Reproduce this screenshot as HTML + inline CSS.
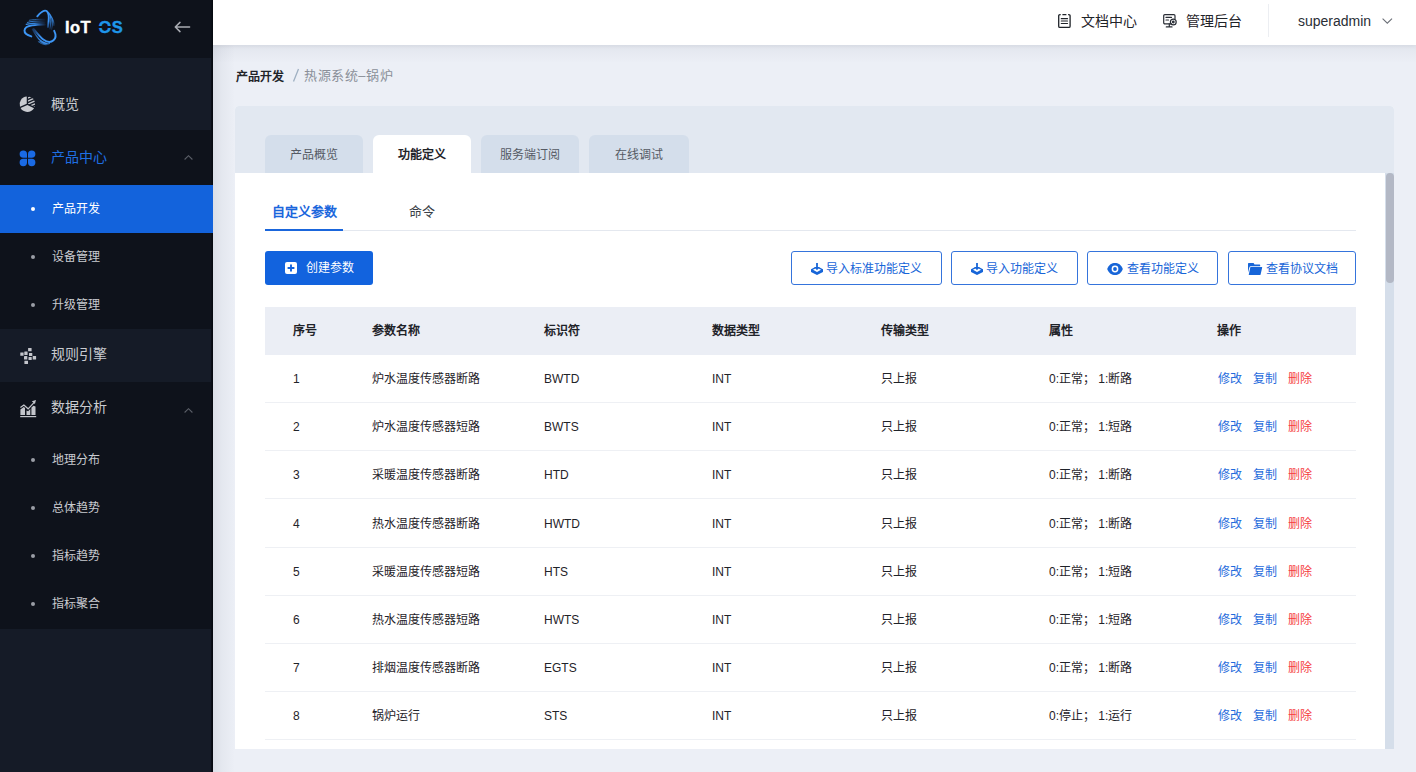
<!DOCTYPE html>
<html lang="zh-CN"><head><meta charset="utf-8">
<style>
*{margin:0;padding:0;box-sizing:border-box}
html,body{width:1416px;height:772px;overflow:hidden;background:#eceff6;font-family:"Liberation Sans",sans-serif;}
.abs{position:absolute}
svg{position:absolute;overflow:visible}
#side{position:absolute;left:0;top:0;width:213px;height:772px;background:#151b27;}
.mi{position:absolute;left:0;width:213px;}
.dark{background:#0e121b}
.lt{background:#151b27}
.mt{position:absolute;left:51px;font-size:14px;line-height:20px;color:#c9cbd0;white-space:nowrap}
.st{position:absolute;left:52px;font-size:12px;line-height:20px;color:#c9cbd0;white-space:nowrap}
.dot{position:absolute;left:31px;width:4px;height:4px;border-radius:50%;background:#9a9ea6}
.chev{position:absolute;left:184px;width:9px;height:5px}
#hdr{position:absolute;left:213px;top:0;width:1203px;height:45px;background:#fff;box-shadow:0 1px 4px rgba(0,21,41,.06);z-index:2}
#hshade{position:absolute;left:213px;top:45px;width:1203px;height:18px;background:linear-gradient(to bottom,rgba(30,45,70,.055),rgba(30,45,70,.03) 35%,rgba(30,45,70,0));z-index:1}
#shade{position:absolute;left:213px;top:45px;width:22px;height:727px;background:linear-gradient(to right,rgba(40,50,70,.085),rgba(40,50,70,.04) 40%,rgba(40,50,70,0));z-index:1}
.ht{position:absolute;font-size:14px;line-height:20px;color:#1f2329;white-space:nowrap}
#card{position:absolute;left:235px;top:106px;width:1159px;height:643px;background:#fff;border-radius:4px 4px 0 0;overflow:hidden}
#ctop{position:absolute;left:0;top:0;width:1159px;height:67px;background:#e2e8f1}
.tab{position:absolute;top:29px;height:38px;width:98px;background:#d4deeb;border-radius:6px 6px 0 0;font-size:12px;color:#555a64;text-align:center;line-height:40px}
.tab.on{background:#fff;color:#1f2329;font-weight:bold}
.subt{position:absolute;top:94px;font-size:13px;line-height:24px;white-space:nowrap}
.btn{position:absolute;top:145px;height:34px;border:1px solid #3574dc;border-radius:3px;font-size:12px;line-height:34px;color:#1765d8;white-space:nowrap;padding-left:36px}
.btn svg{top:11px;left:19px}
.thead{position:absolute;left:30px;top:201px;width:1091px;height:48px;background:#ebeef5}
.th{position:absolute;font-size:12px;line-height:48px;font-weight:bold;color:#1f2329;white-space:nowrap}
.td{position:absolute;font-size:12px;line-height:48px;color:#1f2329;white-space:nowrap}
.row{position:absolute;left:30px;width:1091px;height:48px;border-bottom:1px solid #eef0f4}
.ops span{color:#1f6bdc;margin-right:11px}
.ops span.del{color:#f53d41}
#sb{position:absolute;left:1150px;top:67px;width:9px;height:576px;background:#d5deea}
#thumb{position:absolute;left:1px;top:0;width:8px;height:110px;background:#b3b8c5;border-radius:4px}
</style></head>
<body>
<div id="side">
  <div class="mi dark" style="top:0;height:58px"></div>
  <div class="mi lt" style="top:58px;height:72px"></div>
  <div class="mi dark" style="top:130px;height:499px"></div>
  <div class="mi lt" style="top:329px;height:53px"></div>
  <div class="abs" style="left:211px;top:0;width:2px;height:772px;background:linear-gradient(to right,#0c1018,#06090f)"></div>
  <div class="mi" style="top:185px;height:48px;background:#1363dc"></div>

  <!-- logo -->
  <svg style="left:20px;top:7px" width="40" height="40" viewBox="0 0 40 40">
    <defs>
      <linearGradient id="gt" gradientUnits="userSpaceOnUse" x1="0" y1="4" x2="0" y2="25"><stop offset="0" stop-color="#3d97f7"/><stop offset=".5" stop-color="#3990f0"/><stop offset="1" stop-color="#2a6fd0" stop-opacity="0"/></linearGradient>
      <linearGradient id="gl" gradientUnits="userSpaceOnUse" x1="5" y1="0" x2="27" y2="0"><stop offset="0" stop-color="#3d97f7"/><stop offset=".45" stop-color="#3990f0"/><stop offset="1" stop-color="#2a6fd0" stop-opacity="0"/></linearGradient>
      <linearGradient id="gb" gradientUnits="userSpaceOnUse" x1="34" y1="34" x2="10" y2="19"><stop offset="0" stop-color="#3d97f7"/><stop offset=".5" stop-color="#3990f0"/><stop offset="1" stop-color="#2a6fd0" stop-opacity="0"/></linearGradient>
    </defs>
    <g fill="none" stroke-linecap="round">
      <g stroke="url(#gt)">
        <path d="M17.3 9.3C20 6 22.5 3.8 25 3.6C27.5 3.5 28.8 6.5 28.8 10.5C28.8 13.5 28.5 16 28 20" stroke-width="1.9"/>
        <path d="M28.6 5.8C30.5 7.6 31 10 31 13C31 16 30.5 19 30 22" stroke-width="1.2" opacity=".9"/>
        <path d="M30.2 7.8C32.3 10 32.8 13 32.7 16C32.6 18.5 32 20.5 31.5 22.5" stroke-width="1.1" opacity=".75"/>
        <path d="M31.6 10.3C33.6 12.5 34.1 15.5 33.9 18.5" stroke-width="1" opacity=".6"/>
      </g>
      <g stroke="url(#gl)">
        <path d="M11.3 29.4C7 28 4.3 26 4.5 23.5C4.7 20.5 8 19 12 18.4C16 17.8 19 17.6 25 17.6" stroke-width="1.9"/>
        <path d="M6.2 17.4C9 16.3 14 15.8 25 15.8" stroke-width="1.2" opacity=".9"/>
        <path d="M7.4 15.4C10.5 14.4 15 14 25 14" stroke-width="1.1" opacity=".75"/>
        <path d="M9.3 13.3C12 12.6 16 12.3 25 12.3" stroke-width="1" opacity=".6"/>
      </g>
      <g stroke="url(#gb)">
        <path d="M34.2 23.8C35.8 27 36 31 33.5 33.3C31 35.5 27 35.2 23.3 32.5C20 30 17.5 26.5 13.5 22" stroke-width="1.9"/>
        <path d="M27 36.6C24 36 21.5 34.8 19.3 32.5C16.8 30 14.8 26.5 12.3 22.2" stroke-width="1.2" opacity=".9"/>
        <path d="M29.5 36.4C26 37.5 22.5 36.5 19.8 34.3" stroke-width="1.1" opacity=".75"/>
        <path d="M26 37.8C23 37.5 20.5 36.5 18.2 34.6" stroke-width="1" opacity=".6"/>
      </g>
    </g>
  </svg>
  <div class="abs" style="left:65px;top:14.5px;font-size:16.5px;line-height:24px;font-weight:bold;color:#fff;letter-spacing:.4px;-webkit-text-stroke:.35px #fff">IoT</div>
  <div class="abs" style="left:98.5px;top:14.5px;font-size:16.5px;line-height:24px;font-weight:bold;color:#1e96ea;letter-spacing:.3px;-webkit-text-stroke:.35px #1e96ea">OS</div>
  <div class="abs" style="left:98px;top:25.8px;width:13px;height:1.8px;background:#0e121b"></div>
  <svg style="left:174px;top:21px" width="17" height="12" viewBox="0 0 17 12"><path d="M15.6 6H2 M6 1.4L1.3 6L6 10.6" fill="none" stroke="#a9acb3" stroke-width="1.5" stroke-linecap="round" stroke-linejoin="round"/></svg>

  <!-- 概览 pie -->
  <svg style="left:19px;top:96px" width="16" height="16" viewBox="0 0 16 16">
    <defs><clipPath id="pcl"><path d="M9.05 7.80L9.05 0.43A7.8 7.8 0 0 1 15.64 11.10Z"/></clipPath></defs>
    <path d="M7.75 7.78L1.03 10.77A7.8 7.8 0 0 1 7.75 0.43Z" fill="#c9cbd0"/>
    <path d="M8.38 8.92L15.06 12.26A7.8 7.8 0 0 1 1.56 11.96Z" fill="#c9cbd0"/>
    <g clip-path="url(#pcl)" stroke="#c9cbd0" stroke-width="1.4">
      <path d="M6 3.4L16 -1.2 M6 6.4L16 1.8 M6 9.4L16 4.8 M6 12.4L16 7.8 M6 15.4L16 10.8"/>
    </g>
  </svg>
  <div class="mt" style="top:94px">概览</div>

  <!-- 产品中心 clover -->
  <svg style="left:19px;top:150px" width="17" height="17" viewBox="0 0 17 17" fill="#1a6ae4">
    <path d="M8 7.8H4.3A3.7 3.7 0 1 1 8 4.1Z"/>
    <path d="M9 7.8V4.1A3.7 3.7 0 1 1 12.7 7.8Z"/>
    <path d="M8 8.8V12.5A3.7 3.7 0 1 1 4.3 8.8Z"/>
    <path d="M9 8.8H12.7A3.7 3.7 0 1 1 9 12.5Z"/>
  </svg>
  <div class="mt" style="top:147px;color:#1f6fe3">产品中心</div>
  <svg class="chev" style="top:155px" viewBox="0 0 9 5"><path d="M0.6 4.5L4.5 0.7L8.4 4.5" fill="none" stroke="#5b5f68" stroke-width="1.1"/></svg>

  <div class="dot" style="top:207px;background:#fff"></div>
  <div class="st" style="top:199px;color:#fff">产品开发</div>
  <div class="dot" style="top:255px"></div>
  <div class="st" style="top:247px">设备管理</div>
  <div class="dot" style="top:303px"></div>
  <div class="st" style="top:295px">升级管理</div>

  <!-- 规则引擎 -->
  <svg style="left:19.5px;top:348px" width="17" height="17" viewBox="0 0 17 17" fill="#c3c5cb">
    <rect x="8.1" y="0" width="3.5" height="3.3" rx=".3"/>
    <rect x="0.3" y="4.4" width="3.3" height="3.4" rx=".3"/>
    <rect x="4.3" y="3.6" width="3.3" height="3.4" rx=".3"/>
    <rect x="9" y="4.9" width="3.3" height="3.2" rx=".3"/>
    <rect x="4" y="8.1" width="3.3" height="3.4" rx=".3"/>
    <rect x="8.5" y="8.9" width="3.2" height="3.2" rx=".3"/>
    <rect x="12.7" y="8" width="3.4" height="3.5" rx=".3"/>
    <rect x="4.4" y="12.8" width="3.6" height="3.2" rx=".3"/>
  </svg>
  <div class="mt" style="top:344px">规则引擎</div>

  <!-- 数据分析 -->
  <svg style="left:19.5px;top:400px" width="17" height="18" viewBox="0 0 17 18" fill="#c3c5cb">
    <rect x="0.2" y="16" width="16" height="1.2"/>
    <path d="M0.4 9.4L3.8 7L5 7.9V15H0.4Z"/>
    <path d="M6.5 10.4L8.1 11.2L10.3 9V15H6.5Z"/>
    <path d="M11.4 7.8L13.4 5.7L15.5 6.5V15H11.4Z"/>
    <path d="M0.4 7.6L3.9 5.1L8.1 8.8L14.2 2.3" fill="none" stroke="#c3c5cb" stroke-width="1.2"/>
    <path d="M11.8 1.3L16 0L14.9 4.1Z"/>
  </svg>
  <div class="mt" style="top:397px">数据分析</div>
  <svg class="chev" style="top:408px" viewBox="0 0 9 5"><path d="M0.6 4.5L4.5 0.7L8.4 4.5" fill="none" stroke="#5b5f68" stroke-width="1.1"/></svg>

  <div class="dot" style="top:458px"></div>
  <div class="st" style="top:450px">地理分布</div>
  <div class="dot" style="top:506px"></div>
  <div class="st" style="top:498px">总体趋势</div>
  <div class="dot" style="top:554px"></div>
  <div class="st" style="top:546px">指标趋势</div>
  <div class="dot" style="top:602px"></div>
  <div class="st" style="top:594px">指标聚合</div>
</div>

<div id="hdr">
  <svg style="left:845px;top:13.5px" width="13" height="14" viewBox="0 0 13 14" fill="none" stroke="#1f2329" stroke-width="1.3" stroke-linecap="round">
    <path d="M2.2 0.7H1.9A1.2 1.2 0 0 0 0.7 1.9V12.2A1.2 1.2 0 0 0 1.9 13.4H10.9A1.2 1.2 0 0 0 12.1 12.2V1.9A1.2 1.2 0 0 0 10.9 0.7H10.6 M4.9 0.7H7.9"/>
    <path d="M3.3 4.7H9.5 M3.3 7H9.5 M3.3 9.5H9.5" stroke-width="1.2"/>
  </svg>
  <div class="ht" style="left:868px;top:11px">文档中心</div>
  <svg style="left:950px;top:13.5px" width="15" height="14" viewBox="0 0 15 14" fill="none" stroke="#2a2e36" stroke-width="1.2" stroke-linecap="round">
    <path d="M8.5 9.8H1.8A1.1 1.1 0 0 1 0.7 8.7V1.8A1.1 1.1 0 0 1 1.8 0.7H10.9A1.1 1.1 0 0 1 12 1.8V4.6"/>
    <path d="M3 3.4H8.5 M3 6H5.5"/>
    <path d="M6.3 9.8V12.8 M3.3 12.9H9"/>
    <circle cx="10.3" cy="8" r="2.9"/>
    <circle cx="10.3" cy="8" r=".8" fill="#2a2e36"/>
  </svg>
  <div class="ht" style="left:973px;top:11px">管理后台</div>
  <div class="abs" style="left:1055px;top:4px;width:1px;height:33px;background:#eceef2"></div>
  <div class="ht" style="left:1085px;top:11px;color:#2a2e36">superadmin</div>
  <svg style="left:1169px;top:17.5px" width="11" height="6" viewBox="0 0 11 6"><path d="M0.6 0.6L5.3 5.2L10 0.6" fill="none" stroke="#6b6f77" stroke-width="1.1"/></svg>
</div>
<div id="shade"></div>
<div id="hshade"></div>

<div class="abs" style="left:236px;top:66.5px;font-size:12px;line-height:20px;font-weight:bold;color:#1f2329;white-space:nowrap">产品开发</div>
<svg style="left:292px;top:68px" width="8" height="15" viewBox="0 0 8 15"><path d="M6.5 1L1.5 13.6" stroke="#9fb0c2" stroke-width="1.3"/></svg>
<div class="abs" style="left:304px;top:65.5px;font-size:13px;letter-spacing:.55px;line-height:20px;color:#8a8f99;white-space:nowrap">热源系统–锅炉</div>

<div id="card">
  <div id="ctop"></div>
  <div class="tab" style="left:30px">产品概览</div>
  <div class="tab on" style="left:138px">功能定义</div>
  <div class="tab" style="left:246px">服务端订阅</div>
  <div class="tab" style="left:354px;width:100px">在线调试</div>

  <div class="subt" style="left:37px;color:#1a66dc;font-weight:bold">自定义参数</div>
  <div class="subt" style="left:174px;color:#3a3f48">命令</div>
  <div class="abs" style="left:30px;top:124px;width:1091px;height:1px;background:#e4e8ef"></div>
  <div class="abs" style="left:30px;top:123px;width:78px;height:2px;background:#1a66dc"></div>

  <div class="abs" style="left:30px;top:145px;width:108px;height:34px;background:#1263de;border-radius:3px"></div>
  <svg style="left:50px;top:156px" width="12" height="12" viewBox="0 0 12 12"><rect width="12" height="12" rx="2" fill="#fff"/><path d="M6 2.6V9.4 M2.6 6H9.4" stroke="#1263de" stroke-width="1.9"/></svg>
  <div class="abs" style="left:71px;top:145px;line-height:34px;font-size:12px;color:#fff;white-space:nowrap">创建参数</div>

  <div class="btn" style="left:556px;width:151px;padding-left:34px"><svg width="12" height="12" viewBox="0 0 12 12" fill="#1765d8"><path d="M0 6.2L3.8 4.2H8.2L12 6.2V9.1L6 12L0 9.1Z"/><path d="M1.9 6.8L6 4.7L10.1 6.8L6 9Z" fill="#fff"/><rect x="5.1" y="0" width="1.8" height="5"/><path d="M3.2 4L6 7.3L8.8 4Z"/></svg>导入标准功能定义</div>
  <div class="btn" style="left:716px;width:127px;padding-left:34px"><svg width="12" height="12" viewBox="0 0 12 12" fill="#1765d8"><path d="M0 6.2L3.8 4.2H8.2L12 6.2V9.1L6 12L0 9.1Z"/><path d="M1.9 6.8L6 4.7L10.1 6.8L6 9Z" fill="#fff"/><rect x="5.1" y="0" width="1.8" height="5"/><path d="M3.2 4L6 7.3L8.8 4Z"/></svg>导入功能定义</div>
  <div class="btn" style="left:852px;width:131px;padding-left:39px"><svg width="16" height="12" viewBox="0 0 16 12"><path d="M0.2 6C1.8 1.6 4.8 0 8 0C11.2 0 14.2 1.6 15.8 6C14.2 10.4 11.2 12 8 12C4.8 12 1.8 10.4 0.2 6Z" fill="#1765d8"/><circle cx="8" cy="6" r="3.4" fill="#fff"/><circle cx="8" cy="6" r="1.9" fill="#1765d8"/></svg>查看功能定义</div>
  <div class="btn" style="left:993px;width:128px;padding-left:37px"><svg width="14" height="12" viewBox="0 0 14 12" fill="#1765d8"><path d="M0 0.7Q0 0 0.7 0H5.6L6.5 1.6H11.6Q12.2 1.6 12.2 2.2V3.2H2.7Q1.8 3.2 1.5 4.1L0 9.6Z"/><path d="M2.4 4H13.8Q14.3 4 14.2 4.6L12.6 11.4Q12.4 12 11.8 12H1.2Q0.6 12 0.8 11.4Z"/></svg>查看协议文档</div>

  <div class="thead"></div>
  <div class="th" style="left:58px;top:201px">序号</div>
  <div class="th" style="left:137px;top:201px">参数名称</div>
  <div class="th" style="left:309px;top:201px">标识符</div>
  <div class="th" style="left:477px;top:201px">数据类型</div>
  <div class="th" style="left:646px;top:201px">传输类型</div>
  <div class="th" style="left:814px;top:201px">属性</div>
  <div class="th" style="left:982px;top:201px">操作</div>
  <div class="row" style="top:249.0px"></div>
  <div class="td" style="left:58px;top:249.0px">1</div>
  <div class="td" style="left:137px;top:249.0px">炉水温度传感器断路</div>
  <div class="td" style="left:309px;top:249.0px">BWTD</div>
  <div class="td" style="left:477px;top:249.0px">INT</div>
  <div class="td" style="left:646px;top:249.0px">只上报</div>
  <div class="td" style="left:814px;top:249.0px">0:正常； 1:断路</div>
  <div class="td ops" style="left:983px;top:249.0px"><span>修改</span><span>复制</span><span class="del">删除</span></div>
  <div class="row" style="top:297.2px"></div>
  <div class="td" style="left:58px;top:297.2px">2</div>
  <div class="td" style="left:137px;top:297.2px">炉水温度传感器短路</div>
  <div class="td" style="left:309px;top:297.2px">BWTS</div>
  <div class="td" style="left:477px;top:297.2px">INT</div>
  <div class="td" style="left:646px;top:297.2px">只上报</div>
  <div class="td" style="left:814px;top:297.2px">0:正常； 1:短路</div>
  <div class="td ops" style="left:983px;top:297.2px"><span>修改</span><span>复制</span><span class="del">删除</span></div>
  <div class="row" style="top:345.4px"></div>
  <div class="td" style="left:58px;top:345.4px">3</div>
  <div class="td" style="left:137px;top:345.4px">采暖温度传感器断路</div>
  <div class="td" style="left:309px;top:345.4px">HTD</div>
  <div class="td" style="left:477px;top:345.4px">INT</div>
  <div class="td" style="left:646px;top:345.4px">只上报</div>
  <div class="td" style="left:814px;top:345.4px">0:正常； 1:断路</div>
  <div class="td ops" style="left:983px;top:345.4px"><span>修改</span><span>复制</span><span class="del">删除</span></div>
  <div class="row" style="top:393.6px"></div>
  <div class="td" style="left:58px;top:393.6px">4</div>
  <div class="td" style="left:137px;top:393.6px">热水温度传感器断路</div>
  <div class="td" style="left:309px;top:393.6px">HWTD</div>
  <div class="td" style="left:477px;top:393.6px">INT</div>
  <div class="td" style="left:646px;top:393.6px">只上报</div>
  <div class="td" style="left:814px;top:393.6px">0:正常； 1:断路</div>
  <div class="td ops" style="left:983px;top:393.6px"><span>修改</span><span>复制</span><span class="del">删除</span></div>
  <div class="row" style="top:441.8px"></div>
  <div class="td" style="left:58px;top:441.8px">5</div>
  <div class="td" style="left:137px;top:441.8px">采暖温度传感器短路</div>
  <div class="td" style="left:309px;top:441.8px">HTS</div>
  <div class="td" style="left:477px;top:441.8px">INT</div>
  <div class="td" style="left:646px;top:441.8px">只上报</div>
  <div class="td" style="left:814px;top:441.8px">0:正常； 1:短路</div>
  <div class="td ops" style="left:983px;top:441.8px"><span>修改</span><span>复制</span><span class="del">删除</span></div>
  <div class="row" style="top:490.0px"></div>
  <div class="td" style="left:58px;top:490.0px">6</div>
  <div class="td" style="left:137px;top:490.0px">热水温度传感器短路</div>
  <div class="td" style="left:309px;top:490.0px">HWTS</div>
  <div class="td" style="left:477px;top:490.0px">INT</div>
  <div class="td" style="left:646px;top:490.0px">只上报</div>
  <div class="td" style="left:814px;top:490.0px">0:正常； 1:短路</div>
  <div class="td ops" style="left:983px;top:490.0px"><span>修改</span><span>复制</span><span class="del">删除</span></div>
  <div class="row" style="top:538.2px"></div>
  <div class="td" style="left:58px;top:538.2px">7</div>
  <div class="td" style="left:137px;top:538.2px">排烟温度传感器断路</div>
  <div class="td" style="left:309px;top:538.2px">EGTS</div>
  <div class="td" style="left:477px;top:538.2px">INT</div>
  <div class="td" style="left:646px;top:538.2px">只上报</div>
  <div class="td" style="left:814px;top:538.2px">0:正常； 1:断路</div>
  <div class="td ops" style="left:983px;top:538.2px"><span>修改</span><span>复制</span><span class="del">删除</span></div>
  <div class="row" style="top:586.4px"></div>
  <div class="td" style="left:58px;top:586.4px">8</div>
  <div class="td" style="left:137px;top:586.4px">锅炉运行</div>
  <div class="td" style="left:309px;top:586.4px">STS</div>
  <div class="td" style="left:477px;top:586.4px">INT</div>
  <div class="td" style="left:646px;top:586.4px">只上报</div>
  <div class="td" style="left:814px;top:586.4px">0:停止； 1:运行</div>
  <div class="td ops" style="left:983px;top:586.4px"><span>修改</span><span>复制</span><span class="del">删除</span></div>

  <div id="sb"><div id="thumb"></div></div>
</div>
</body></html>
